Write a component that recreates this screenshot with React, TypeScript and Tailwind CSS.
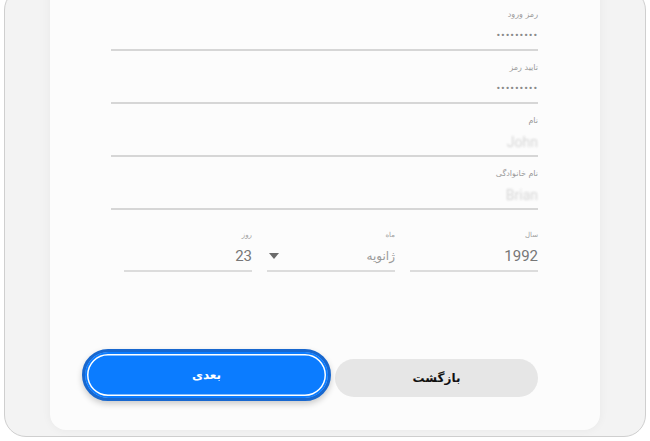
import React from 'react';

const persian = { fontFamily: '"DejaVu Sans", "Noto Sans", sans-serif' };
const latin = { fontFamily: 'Roboto, "Liberation Sans", sans-serif' };

function TextField({ label, value, kind }: { label: string; value: string; kind: 'password' | 'placeholder' }) {
  return (
    <div className="border-b-2 border-[#d6d6d6] pb-[4px]">
      <div className="h-[12px] text-[8px] leading-[12px] text-[#9a9a9a]" style={persian}>
        {label}
      </div>
      <div className="mt-[4px] h-[20px] leading-[20px]">
        {kind === 'password' ? (
          <span className="inline-block -translate-y-[2px] text-[11px] tracking-[0.9px] text-[#8a8a8a]" style={latin}>{value}</span>
        ) : (
          <span className="inline-block text-[14px] text-[#d6d6d6] blur-[1.2px]" style={latin}>{value}</span>
        )}
      </div>
    </div>
  );
}

function DateField({ label, value, persianValue, select }: { label: string; value: string; persianValue?: boolean; select?: boolean }) {
  return (
    <div className="w-[128px] border-b-2 border-[#dcdcdc] pb-[4px]">
      <div className="h-[12px] text-[7px] leading-[12px] text-[#a0a0a0]" style={persian}>
        {label}
      </div>
      <div className="mt-[5px] flex h-[20px] items-center justify-between">
        {persianValue ? (
          <span className="text-[12px] text-[#9a9a9a]" style={persian}>{value}</span>
        ) : (
          <span className="text-[15px] text-[#777]" style={latin}>{value}</span>
        )}
        {select && (
          <svg width="10" height="6" viewBox="0 0 10 6" className="ml-[2px]">
            <path d="M0 0h10L5 6z" fill="#6b6b6b" />
          </svg>
        )}
      </div>
    </div>
  );
}

export default function App() {
  return (
    <div className="h-[441px] w-[650px] overflow-hidden bg-white">
      <div className="mx-[4px] mt-[-12px] h-[449px] rounded-[22px] border border-[#cfcfcf] bg-[#f3f3f3] px-[45px] pb-[6px]">
        <div className="h-full rounded-b-[16px] bg-[#fcfcfc] pl-[61px] pr-[62px] pt-[20px] shadow-[0_0_10px_rgba(0,0,0,0.05)]" dir="rtl">
          <div className="flex flex-col gap-[11px]">
            <TextField label="رمز ورود" value="•••••••••" kind="password" />
            <TextField label="تایید رمز" value="•••••••••" kind="password" />
            <TextField label="نام" value="John" kind="placeholder" />
            <TextField label="نام خانوادگی" value="Brian" kind="placeholder" />
          </div>

          <div className="mt-[19px] flex gap-[15px]">
            <DateField label="سال" value="1992" />
            <DateField label="ماه" value="ژانویه" persianValue select />
            <DateField label="روز" value="23" />
          </div>

          <div className="mt-[87px] flex items-start gap-[4px]">
            <button
              className="h-[38px] w-[203px] shrink-0 rounded-full bg-[#e6e6e6] text-[12px] font-bold text-[#111]"
              style={persian}
            >
              بازگشت
            </button>
            <button
              className="mt-[-10px] h-[52px] w-[249px] shrink-0 rounded-full border-[3px] border-[#1767cf] bg-[#0b7cff] text-[12px] font-bold text-white shadow-[inset_0_0_0_2px_#0b7cff,inset_0_0_0_3.5px_#ffffff,0_3px_6px_rgba(0,0,0,0.2)]"
              style={persian}
            >
              بعدی
            </button>
          </div>
        </div>
      </div>
    </div>
  );
}
